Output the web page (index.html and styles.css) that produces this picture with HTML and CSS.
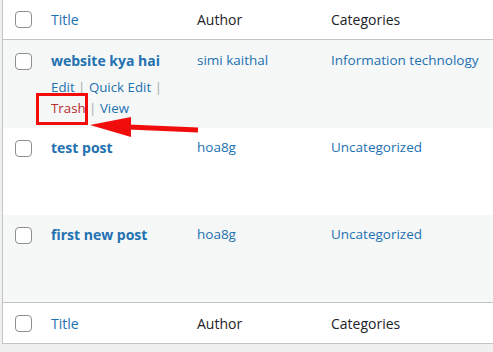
FILE: index.html
```html
<!DOCTYPE html>
<html>
<head>
<meta charset="utf-8">
<link rel="stylesheet" href="styles.css">
</head>
<body>
<div class="page">
  <div class="table">
    <div class="row head">
      <div class="cb"><span class="box"></span></div>
      <div class="cell"><a class="sort">Title</a></div>
      <div class="cell">Author</div>
      <div class="cell">Categories</div>
    </div>
    <div class="row alt first">
      <div class="cb"><span class="box"></span></div>
      <div class="cell">
        <a class="title">website kya hai</a>
        <div class="actions">
          <div><a>Edit</a> <span class="sep">|</span> <a>Quick Edit</a> <span class="sep">|</span></div>
          <div><a class="trash">Trash</a> <span class="sep">|</span> <a>View</a></div>
        </div>
      </div>
      <div class="cell"><a>simi kaithal</a></div>
      <div class="cell"><a>Information technology</a></div>
    </div>
    <div class="row">
      <div class="cb"><span class="box"></span></div>
      <div class="cell"><a class="title">test post</a></div>
      <div class="cell"><a>hoa8g</a></div>
      <div class="cell"><a>Uncategorized</a></div>
    </div>
    <div class="row alt">
      <div class="cb"><span class="box"></span></div>
      <div class="cell"><a class="title">first new post</a></div>
      <div class="cell"><a>hoa8g</a></div>
      <div class="cell"><a>Uncategorized</a></div>
    </div>
    <div class="row foot">
      <div class="cb"><span class="box"></span></div>
      <div class="cell"><a class="sort">Title</a></div>
      <div class="cell">Author</div>
      <div class="cell">Categories</div>
    </div>
  </div>
  <div class="highlight"></div>
  <svg class="arrow" width="120" height="30" viewBox="85 112 120 30">
    <line x1="128" y1="127" x2="198" y2="130" stroke="#f20d0d" stroke-width="5"/>
    <polygon points="90,125 131,117 131,137" fill="#f20d0d"/>
  </svg>
</div>
</body>
</html>
```

FILE: styles.css
```css
html, body {
  margin: 0;
  padding: 0;
  background: #f0f0f1;
  overflow: hidden;
}
body {
  font-family: "Open Sans", "Noto Sans", sans-serif;
  font-size: 13.5px;
  color: #1d2327;
}
.page {
  position: relative;
  width: 493px;
  height: 352px;
}
.table {
  margin-left: 2px;
  width: 491px;
  box-sizing: border-box;
  border-left: 1px solid #c3c4c7;
  border-bottom: 1px solid #c3c4c7;
  background: #fff;
  overflow: hidden;
}
a {
  color: #2271b1;
  text-decoration: none;
}
.row {
  display: grid;
  grid-template-columns: 48px 146px 134px 1fr;
  height: 87px;
  box-sizing: border-box;
  padding-top: 9px;
}
.row.alt {
  background: #f6f7f7;
}
.row.first {
  height: 88px;
  padding-top: 10px;
}
.row.head {
  height: 40px;
  padding-top: 0;
  border-bottom: 1px solid #c3c4c7;
  align-items: center;
}
.row.foot {
  height: 41px;
  padding-top: 0;
  border-top: 1px solid #c3c4c7;
  align-items: center;
}
.cb {
  padding-left: 12px;
}
.row:not(.head):not(.foot) .cb {
  padding-top: 3px;
}
.box {
  display: block;
  width: 15px;
  height: 15px;
  border: 1px solid #8c8f94;
  border-radius: 4px;
  background: #fff;
}
.cell {
  line-height: 21px;
  white-space: nowrap;
}
.head .cell, .foot .cell {
  font-size: 14px;
}
.title {
  font-weight: 700;
  font-size: 14px;
}
.actions {
  margin-top: 5px;
  font-size: 13.3px;
  line-height: 21px;
}
.sep {
  color: #a7aaad;
}
.trash {
  color: #b32d2e;
}
.highlight {
  position: absolute;
  left: 36px;
  top: 93px;
  width: 46px;
  height: 26px;
  border: 3px solid #f20d0d;
}
.arrow {
  position: absolute;
  left: 85px;
  top: 112px;
}
```
